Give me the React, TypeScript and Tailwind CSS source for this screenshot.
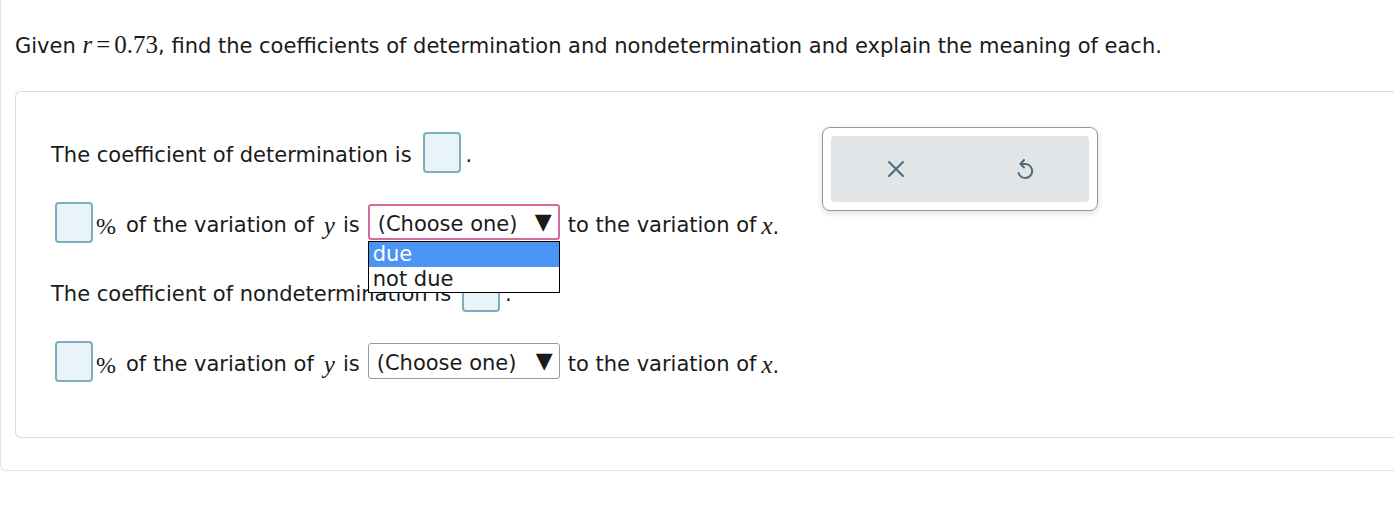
import React from 'react';

const sans = { fontFamily: '"DejaVu Sans", Verdana, sans-serif' };

function Box({ className = '' }: { className?: string }) {
  return (
    <span
      className={`inline-block w-[38px] h-[41px] rounded-[4px] border-2 border-[#7eaebd] bg-[#e9f4f9] align-middle ${className}`}
    />
  );
}

function Var({ children }: { children: React.ReactNode }) {
  return <i className="font-['Liberation_Serif',serif] text-[25px]">{children}</i>;
}

function Select({ focused = false }: { focused?: boolean }) {
  return (
    <span
      className={`inline-flex items-center justify-between w-[192px] h-[36px] pl-[8px] pr-[6px] rounded-[3px] bg-white align-middle ${
        focused ? 'border-2 border-[#d46b9b]' : 'border border-[#9a9a9a]'
      }`}
    >
      <span className="pt-[5px]">(Choose one)</span>
      <span className="text-[22px] leading-none">▼</span>
    </span>
  );
}

export default function App() {
  return (
    <div className="w-[1394px] h-[524px] bg-white text-[#1a1a1a] overflow-hidden" style={sans}>
      <div className="h-[471px] border-b border-l border-[#dfe5e7] rounded-bl-[6px] pt-[29px]">
        <p className="pl-[14px] text-[21px] leading-[32px]">
          Given <Var>r</Var>
          <span className="font-['Liberation_Serif',serif] text-[25px] mx-[4px]">=</span>
          <span className="font-['Liberation_Serif',serif] text-[25px]">0.73</span>, find the coefficients of
          determination and nondetermination and explain the meaning of each.
        </p>

        <div className="ml-[14px] mt-[29px] h-[347px] border border-r-0 border-[#d8dee1] rounded-l-[6px] flex">
          <div className="w-[806px] pl-[35px] pt-[39px] text-[21px]">
            <div className="flex items-center h-[42px]">
              <span className="pt-[8px]">The coefficient of determination is</span>
              <Box className="ml-[11px]" />
              <span className="ml-[5px] pt-[8px]">.</span>
            </div>

            <div className="flex items-center h-[42px] mt-[28px] relative">
              <Box className="ml-[4px]" />
              <span className="ml-[3px] pt-[8px] font-['Liberation_Serif',serif] text-[24px]">%</span>
              <span className="ml-[10px] pt-[8px]">of the variation of</span>
              <span className="ml-[10px] pt-[8px]"><Var>y</Var></span>
              <span className="ml-[8px] pt-[8px]">is</span>
              <span className="ml-[8px] relative">
                <Select focused />
                <div className="absolute left-0 top-[37px] w-[192px] border border-black bg-white z-10 leading-[25px]">
                  <div className="bg-[#4a94f3] text-white pl-[4px]">due</div>
                  <div className="pl-[4px]">not due</div>
                </div>
              </span>
              <span className="ml-[8px] pt-[8px]">to the variation of</span>
              <span className="ml-[5px] pt-[8px]"><Var>x</Var>.</span>
            </div>

            <div className="flex items-center h-[42px] mt-[27px]">
              <span className="pt-[8px]">The coefficient of nondetermination is</span>
              <Box className="ml-[11px]" />
              <span className="ml-[5px] pt-[8px]">.</span>
            </div>

            <div className="flex items-center h-[42px] mt-[28px]">
              <Box className="ml-[4px]" />
              <span className="ml-[3px] pt-[8px] font-['Liberation_Serif',serif] text-[24px]">%</span>
              <span className="ml-[10px] pt-[8px]">of the variation of</span>
              <span className="ml-[10px] pt-[8px]"><Var>y</Var></span>
              <span className="ml-[8px] pt-[8px]">is</span>
              <span className="ml-[8px]">
                <Select />
              </span>
              <span className="ml-[8px] pt-[8px]">to the variation of</span>
              <span className="ml-[5px] pt-[8px]"><Var>x</Var>.</span>
            </div>
          </div>

          <div className="pt-[35px]">
            <div className="w-[276px] h-[84px] p-[8px] rounded-[8px] border border-[#8d9ca4] bg-white shadow-[0_2px_6px_rgba(0,0,0,0.15)]">
              <div className="h-full rounded-[4px] bg-[#e1e5e8] flex items-center">
                <div className="flex-1 flex justify-center">
                  <svg width="20" height="20" viewBox="0 0 20 20" fill="none" stroke="#4d6b78" strokeWidth="2" strokeLinecap="round">
                    <path d="M3 3L17 17M17 3L3 17" />
                  </svg>
                </div>
                <div className="flex-1 flex justify-center">
                  <svg width="24" height="26" viewBox="0 0 24 26" fill="none" stroke="#4d6b78" strokeWidth="2" strokeLinecap="round" strokeLinejoin="round">
                    <path d="M11 4L7.5 8L11 11.5" />
                    <path d="M7.5 8H12A7 7 0 1 1 5.5 17" />
                  </svg>
                </div>
              </div>
            </div>
          </div>
        </div>
      </div>
    </div>
  );
}
